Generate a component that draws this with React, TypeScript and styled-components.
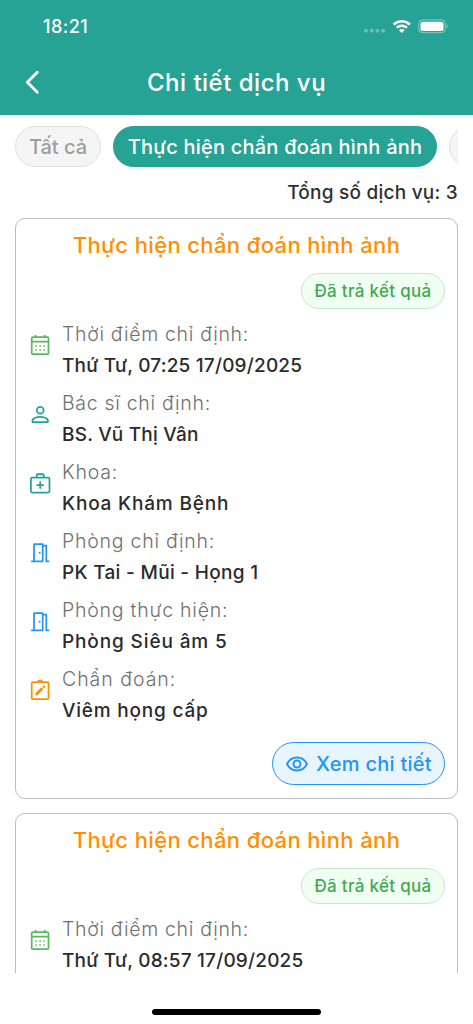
import React from "react";
import styled, { createGlobalStyle } from "styled-components";
import { MdOutlineRemoveRedEye } from "react-icons/md";

const GlobalStyle = createGlobalStyle`
  * { box-sizing: border-box; }
  body {
    margin: 0;
    background: #fff;
    font-family: Inter, "Noto Sans", sans-serif;
    overflow: hidden;
  }
`;

const Screen = styled.div`
  width: 473px;
  height: 1024px;
  display: flex;
  flex-direction: column;
  background: #fff;
`;

const Header = styled.header`
  height: 114.5px;
  flex: none;
  background: #27a395;
  color: #fff;
`;

const StatusBar = styled.div`
  height: 53px;
  padding: 0 25px 0 43px;
  display: flex;
  align-items: center;
  justify-content: space-between;
`;

const Clock = styled.span`
  font-size: 18px;
  font-weight: 500;
  letter-spacing: 0.5px;
`;

const StatusIcons = styled.svg`
  width: 86px;
  height: 18px;
  display: block;
`;

const NavBar = styled.div`
  height: 58px;
  display: grid;
  grid-template-columns: 64px 1fr 64px;
  align-items: center;
`;

const BackIcon = styled.svg`
  width: 16px;
  height: 26px;
  margin-left: 24px;
`;

const Title = styled.h1`
  margin: 0;
  text-align: center;
  font-size: 24px;
  font-weight: 500;
  letter-spacing: 0.5px;
  white-space: nowrap;
`;

const Body = styled.main`
  height: 858px;
  flex: none;
  overflow: hidden;
  padding: 11.5px 15px 0;
`;

const Chips = styled.div`
  display: flex;
  gap: 12px;
  overflow: hidden;
`;

const Chip = styled.div<{ $active?: boolean; $width: number; $track?: number }>`
  flex: none;
  width: ${(p) => p.$width}px;
  height: 41px;
  border-radius: 21px;
  display: flex;
  align-items: center;
  justify-content: center;
  border: 1px solid ${(p) => (p.$active ? "#27a395" : "#e0e0e0")};
  background: ${(p) => (p.$active ? "#27a395" : "#f5f5f5")};
  color: ${(p) => (p.$active ? "#fff" : "#9e9e9e")};
  font-size: 20px;
  font-weight: 500;
  letter-spacing: ${(p) => p.$track ?? 0}px;
  white-space: nowrap;
`;

const Total = styled.div`
  height: 51px;
  line-height: 51px;
  text-align: right;
  font-size: 19px;
  font-weight: 500;
  letter-spacing: 0.24px;
  color: #2f2f2f;
`;

const Card = styled.section`
  border: 1.4px solid #bdbdbd;
  border-radius: 10px;
  height: 580.5px;
  padding: 11px 12px 0;
  margin-bottom: 14.5px;
`;

const CardTitle = styled.h2`
  margin: 0 0 12.5px;
  line-height: 30px;
  text-align: center;
  font-size: 22px;
  font-weight: 500;
  letter-spacing: 0.37px;
  color: #ff8f00;
  white-space: nowrap;
`;

const Badge = styled.div`
  width: 144px;
  height: 36px;
  margin-left: auto;
  border: 1px solid #c8e6c9;
  border-radius: 18px;
  background: #f1fff3;
  color: #43a853;
  display: flex;
  align-items: center;
  justify-content: center;
  font-size: 17px;
  font-weight: 500;
  letter-spacing: 0.3px;
  white-space: nowrap;
`;

const Rows = styled.div`
  display: flex;
  flex-direction: column;
  gap: 7px;
  padding-top: 10.5px;
`;

const Row = styled.div<{ $color: string }>`
  height: 62px;
  display: grid;
  grid-template-columns: 34px 1fr;
  color: ${(p) => p.$color};
`;

const RowIcon = styled.svg`
  width: 24px;
  height: 24px;
  margin-top: 14px;
  fill: none;
  stroke: currentColor;
  stroke-width: 1.75;
  stroke-linejoin: round;
`;

const Label = styled.div<{ $track: number }>`
  line-height: 31px;
  font-size: 19.5px;
  font-weight: 300;
  color: #707070;
  letter-spacing: ${(p) => p.$track}px;
  white-space: nowrap;
`;

const Value = styled.div<{ $track: number }>`
  line-height: 31px;
  font-size: 19px;
  font-weight: 500;
  color: #2b2b2b;
  letter-spacing: ${(p) => p.$track}px;
  white-space: nowrap;
`;

const DetailButton = styled.button`
  width: 173px;
  height: 43px;
  margin: 16px 0 0 auto;
  padding: 0;
  display: flex;
  align-items: center;
  justify-content: center;
  gap: 7px;
  border: 1.4px solid #2196f3;
  border-radius: 22px;
  background: #e8f4fe;
  color: #2196f3;
  font-family: inherit;
  font-size: 20px;
  font-weight: 500;
  letter-spacing: 0.27px;
  white-space: nowrap;

  svg {
    width: 24px;
    height: 24px;
  }
`;

const Footer = styled.footer`
  flex: 1;
  display: flex;
  justify-content: center;
  padding-top: 36px;
`;

const HomeIndicator = styled.div`
  width: 169px;
  height: 6px;
  border-radius: 3px;
  background: #000;
`;

const CalendarIcon = () => (
  <RowIcon viewBox="0 0 24 24">
    <rect x="3.7" y="4.2" width="16.800" height="17" rx="1.200" />
    <path d="M3.700 8.700h16.800M7.500 2v2.500M16.700 2v2.500" />
    <path
      d="M7.300 13h1.600M11.300 13h1.600M15.300 13h1.600M7.300 17h1.600M11.300 17h1.600M15.300 17h1.600"
      strokeWidth="1.600"
    />
  </RowIcon>
);

const PersonIcon = () => (
  <RowIcon viewBox="0 0 24 24">
    <circle cx="12.200" cy="8.300" r="3.400" />
    <path d="M4.500 20v-1.500c0-2.500 4.700-3.700 7.700-3.700s7.700 1.200 7.700 3.700V20z" />
  </RowIcon>
);

const MedicalIcon = () => (
  <RowIcon viewBox="0 0 24 24">
    <rect x="2.900" y="6.500" width="18.600" height="15" rx="1.500" />
    <path d="M8.700 6.500V3.900a.9.900 0 0 1 .9-.9h5.200a.9.900 0 0 1 .9.900v2.600M12.200 10.300v7.400M8.500 14h7.400" />
  </RowIcon>
);

const DoorIcon = () => (
  <RowIcon viewBox="0 0 24 24">
    <path d="M3.200 21.300h11.500V4.200H6v17.100M14.700 5.500h3.600v15.800h3" />
    <circle cx="11.700" cy="12.700" r="1" fill="currentColor" stroke="none" />
  </RowIcon>
);

const ClipboardIcon = () => (
  <RowIcon viewBox="0 0 24 24">
    <rect x="3.700" y="4" width="16.800" height="17.200" rx="1.200" />
    <path d="M9 4c1 0 1.400-1.600 3.100-1.600S14.200 4 15.200 4" />
    <path
      fill="currentColor"
      stroke="none"
      d="M7.400 15.300 13.400 9.300l2 2-6 6h-2zM16.200 10.500l-2-2 .9-.9a.7.700 0 0 1 1 0l1 1a.7.700 0 0 1 0 1z"
    />
  </RowIcon>
);

type RowData = {
  icon: React.ComponentType;
  color: string;
  label: string;
  value: string;
  labelTrack: number;
  valueTrack: number;
};

const timeRow = (value: string): RowData => ({
  icon: CalendarIcon,
  color: "#5cb860",
  label: "Thời điểm chỉ định:",
  value,
  labelTrack: 0.68,
  valueTrack: 0.2,
});

const firstService: RowData[] = [
  timeRow("Thứ Tư, 07:25 17/09/2025"),
  { icon: PersonIcon, color: "#27a395", label: "Bác sĩ chỉ định:", value: "BS. Vũ Thị Vân", labelTrack: 0.7, valueTrack: 0.2 },
  { icon: MedicalIcon, color: "#27a395", label: "Khoa:", value: "Khoa Khám Bệnh", labelTrack: 0.82, valueTrack: 0.82 },
  { icon: DoorIcon, color: "#2196f3", label: "Phòng chỉ định:", value: "PK Tai - Mũi - Họng 1", labelTrack: 0.75, valueTrack: 0.3 },
  { icon: DoorIcon, color: "#2196f3", label: "Phòng thực hiện:", value: "Phòng Siêu âm 5", labelTrack: 0.77, valueTrack: 0.87 },
  { icon: ClipboardIcon, color: "#ff8f00", label: "Chẩn đoán:", value: "Viêm họng cấp", labelTrack: 0.97, valueTrack: 0.8 },
];

const secondService: RowData[] = [timeRow("Thứ Tư, 08:57 17/09/2025")];

const ServiceCard = ({ rows, action }: { rows: RowData[]; action?: boolean }) => (
  <Card>
    <CardTitle>Thực hiện chẩn đoán hình ảnh</CardTitle>
    <Badge>Đã trả kết quả</Badge>
    <Rows>
      {rows.map(({ icon: Icon, ...row }) => (
        <Row key={row.label} $color={row.color}>
          <Icon />
          <div>
            <Label $track={row.labelTrack}>{row.label}</Label>
            <Value $track={row.valueTrack}>{row.value}</Value>
          </div>
        </Row>
      ))}
    </Rows>
    {action && (
      <DetailButton>
        <MdOutlineRemoveRedEye />
        Xem chi tiết
      </DetailButton>
    )}
  </Card>
);

export default function App() {
  return (
    <Screen>
      <GlobalStyle />
      <Header>
        <StatusBar>
          <Clock>18:21</Clock>
          <StatusIcons viewBox="0 0 86 18" fill="none">
            <g fill="#fff" opacity="0.3">
              <circle cx="4" cy="12.700" r="2" />
              <circle cx="9.700" cy="12.700" r="2" />
              <circle cx="15.400" cy="12.700" r="2" />
              <circle cx="21.100" cy="12.700" r="2" />
            </g>
            <g stroke="#fff" strokeWidth="2.500">
              <path d="M31.700 6.500a11.800 11.800 0 0 1 16.200 0" />
              <path d="M34.700 9.700a7.500 7.500 0 0 1 10.200 0" />
            </g>
            <path d="M37 12.200a4.200 4.200 0 0 1 5.600 0L39.800 15z" fill="#fff" />
            <rect x="56.700" y="1.900" width="26.600" height="12.800" rx="4" stroke="#fff" strokeOpacity="0.45" />
            <rect x="58.500" y="3.700" width="23" height="9.200" rx="2.500" fill="#fff" />
            <path d="M84.700 6.200c1.300.5 1.300 3.600 0 4.100z" fill="#fff" opacity="0.5" />
          </StatusIcons>
        </StatusBar>
        <NavBar>
          <BackIcon viewBox="0 0 16 26" fill="none" stroke="#fff" strokeWidth="2.800" strokeLinecap="round" strokeLinejoin="round">
            <path d="M13.300 3.200 3.300 13.200l10 10" />
          </BackIcon>
          <Title>Chi tiết dịch vụ</Title>
        </NavBar>
      </Header>
      <Body>
        <Chips>
          <Chip $width={86}>Tất cả</Chip>
          <Chip $active $width={324} $track={0.22}>
            Thực hiện chẩn đoán hình ảnh
          </Chip>
          <Chip $width={120} />
        </Chips>
        <Total>Tổng số dịch vụ: 3</Total>
        <ServiceCard rows={firstService} action />
        <ServiceCard rows={secondService} />
      </Body>
      <Footer>
        <HomeIndicator />
      </Footer>
    </Screen>
  );
}
